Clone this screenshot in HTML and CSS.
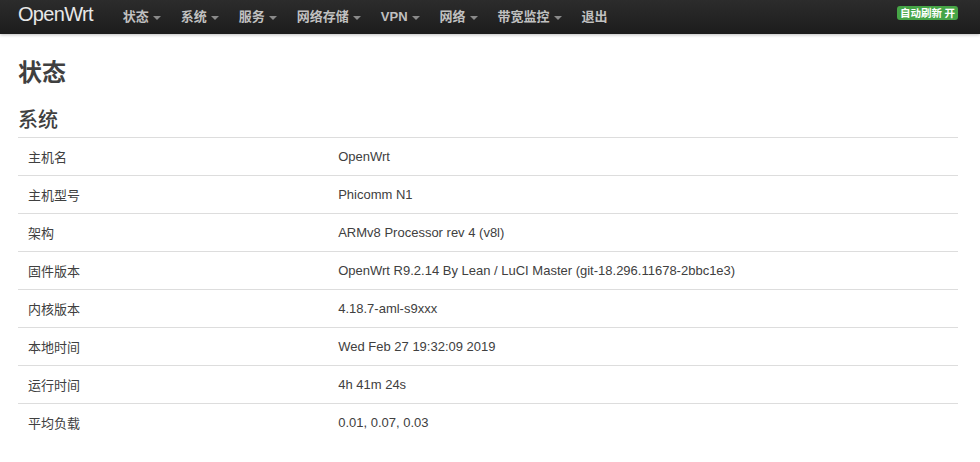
FILE: index.html
```html
<!DOCTYPE html>
<html lang="zh-CN">
<head>
<meta charset="utf-8">
<title>OpenWrt - 状态</title>
<link rel="stylesheet" href="styles.css">
</head>
<body>
<header class="navbar">
  <div class="navbar-inner">
    <a class="brand" href="#">OpenWrt</a>
    <ul class="nav">
      <li><a href="#">状态<span class="caret"></span></a></li>
      <li><a href="#">系统<span class="caret"></span></a></li>
      <li><a href="#">服务<span class="caret"></span></a></li>
      <li><a href="#">网络存储<span class="caret"></span></a></li>
      <li><a href="#">VPN<span class="caret"></span></a></li>
      <li><a href="#">网络<span class="caret"></span></a></li>
      <li><a href="#">带宽监控<span class="caret"></span></a></li>
      <li><a href="#">退出</a></li>
    </ul>
    <div class="pull-right">
      <span class="label">自动刷新 开</span>
    </div>
  </div>
</header>
<main class="container">
  <h2 class="page-title">状态</h2>
  <h3 class="section-title">系统</h3>
  <table class="info">
    <tr><td class="key">主机名</td><td>OpenWrt</td></tr>
    <tr><td class="key">主机型号</td><td>Phicomm N1</td></tr>
    <tr><td class="key">架构</td><td>ARMv8 Processor rev 4 (v8l)</td></tr>
    <tr><td class="key">固件版本</td><td>OpenWrt R9.2.14 By Lean / LuCI Master (git-18.296.11678-2bbc1e3)</td></tr>
    <tr><td class="key">内核版本</td><td>4.18.7-aml-s9xxx</td></tr>
    <tr><td class="key">本地时间</td><td>Wed Feb 27 19:32:09 2019</td></tr>
    <tr><td class="key">运行时间</td><td>4h 41m 24s</td></tr>
    <tr><td class="key">平均负载</td><td>0.01, 0.07, 0.03</td></tr>
  </table>
</main>
</body>
</html>
```

FILE: styles.css
```css
* { box-sizing: border-box; }
html, body {
  margin: 0;
  padding: 0;
  background: #fff;
  font-family: "Liberation Sans", "Noto Sans CJK SC", sans-serif;
  font-size: 13px;
  color: #404040;
}
a { text-decoration: none; }

.navbar {
  height: 34px;
  background: linear-gradient(to bottom, #2c2c2c, #1c1c1c);
  box-shadow: 0 1px 3px rgba(0, 0, 0, 0.25);
}
.navbar-inner {
  width: 940px;
  margin-left: 18px;
  height: 34px;
  display: flex;
  align-items: flex-start;
}
.brand {
  font-size: 20px;
  letter-spacing: -0.7px;
  color: #e8e8e8;
  line-height: 28px;
  padding: 0 20px 0 0;
  font-weight: normal;
}
.nav {
  list-style: none;
  margin: 0;
  padding: 0;
  display: flex;
}
.nav a {
  display: flex;
  align-items: center;
  padding: 7px 10px;
  line-height: 20px;
  color: #c0c0c0;
  font-weight: bold;
  font-size: 13px;
  font-family: "Liberation Sans", "Noto Sans CJK SC", sans-serif;
}
.caret {
  display: inline-block;
  width: 0;
  height: 0;
  margin-left: 4px;
  margin-top: 2px;
  border-top: 4px solid #8a8a8a;
  border-left: 4px solid transparent;
  border-right: 4px solid transparent;
}
.pull-right {
  margin-left: auto;
  padding-top: 5px;
}
.label {
  display: inline-block;
  background: #46a546;
  color: #fff;
  font-weight: bold;
  font-size: 10.5px;
  line-height: 14px;
  padding: 0 3px;
  border-radius: 3px;
  font-family: "Noto Sans CJK SC", sans-serif;
}

.container {
  width: 940px;
  margin-left: 18px;
}
.page-title {
  margin: 22px 0 0;
  font-size: 24px;
  line-height: 30px;
  font-weight: bold;
  color: #404040;
  font-family: "Noto Sans CJK SC", sans-serif;
}
.section-title {
  margin: 21px 0 6px;
  font-size: 20px;
  line-height: 24px;
  font-weight: 500;
  color: #404040;
  font-family: "Noto Sans CJK SC", sans-serif;
}
.info {
  width: 100%;
  border-collapse: collapse;
}
.info td {
  border-top: 1px solid #ddd;
  height: 38px;
  padding: 0 10px;
  vertical-align: middle;
  color: #404040;
  font-size: 13px;
}
.info td.key {
  width: 33%;
}
```
